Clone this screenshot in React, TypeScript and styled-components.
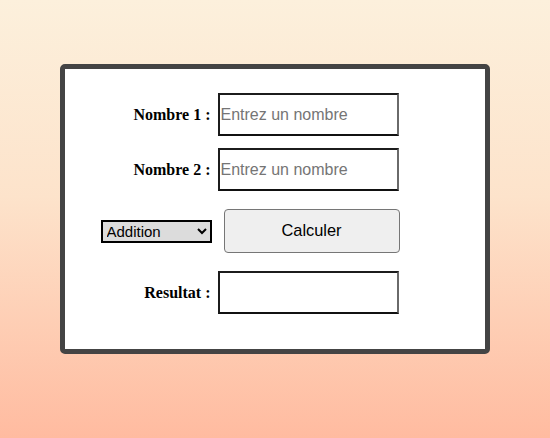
import { FC } from 'react'
import styled, { createGlobalStyle } from 'styled-components'

const GlobalStyle = createGlobalStyle`
  html, body {
    margin: 0;
    padding: 0;
  }
  body {
    min-height: 438px;
    background: linear-gradient(to bottom, #fcf0dc 0%, #fde3cb 45%, #ffbba0 100%);
    font-family: "Liberation Serif", "Times New Roman", serif;
  }
`

const Page = styled.div`
  min-height: 438px;
  display: flex;
  justify-content: center;
  align-items: flex-start;
  padding-top: 64px;
  box-sizing: border-box;
`

const Card = styled.div`
  width: 430px;
  height: 290px;
  box-sizing: border-box;
  margin-left: -1px;
  background: #fff;
  border: 5px solid #444;
  border-radius: 5px;
  padding: 24px 0 0 36px;
`

const Form = styled.div`
  display: grid;
  grid-template-columns: 111px auto;
  column-gap: 6px;
  row-gap: 12px;
  align-items: center;
  justify-content: start;
`

const Label = styled.label`
  justify-self: end;
  margin-right: 1px;
  font-family: "Liberation Serif", "Times New Roman", serif;
  font-weight: bold;
  font-size: 16px;
  color: #000;
  white-space: nowrap;
`

const Field = styled.input`
  width: 181px;
  height: 43px;
  box-sizing: border-box;
  margin: 0;
  padding: 1px 2px 1px 1px;
  font-family: "Liberation Sans", Arial, sans-serif;
  font-size: 16px;
  color: #000;
  background: #fff;
  border: 2px solid #1c1c1c;
  border-right-color: #6a6a6a;
  border-bottom-color: #111;
  outline: none;
  justify-self: start;

  &::placeholder {
    color: #757575;
  }
`

const Operation = styled.select`
  justify-self: end;
  width: 111px;
  height: 23px;
  box-sizing: border-box;
  margin: 0;
  padding: 0;
  font-family: "Liberation Sans", Arial, sans-serif;
  font-size: 15px;
  color: #000;
  background-color: #dcdcdc;
  border: 2px solid #000;
  border-radius: 0;
`

const CalcButton = styled.button`
  justify-self: start;
  width: 176px;
  height: 44px;
  margin: 6px 0 6px 6px;
  box-sizing: border-box;
  font-family: "Liberation Sans", Arial, sans-serif;
  font-size: 16.4px;
  color: #000;
  background: #efefef;
  border: 1px solid #767676;
  border-radius: 4px;
  padding: 0 0 2px 0;
  cursor: pointer;
`

const App: FC = () => {
  return (
    <>
      <GlobalStyle />
      <Page>
        <Card>
          <Form>
            <Label htmlFor="n1">Nombre 1 :</Label>
            <Field id="n1" type="text" placeholder="Entrez un nombre" />
            <Label htmlFor="n2">Nombre 2 :</Label>
            <Field id="n2" type="text" placeholder="Entrez un nombre" />
            <Operation defaultValue="add">
              <option value="add">Addition</option>
              <option value="sub">Soustraction</option>
              <option value="mul">Multiplication</option>
              <option value="div">Division</option>
            </Operation>
            <CalcButton type="button">Calculer</CalcButton>
            <Label htmlFor="res">Resultat :</Label>
            <Field id="res" type="text" readOnly />
          </Form>
        </Card>
      </Page>
    </>
  )
}

export default App
